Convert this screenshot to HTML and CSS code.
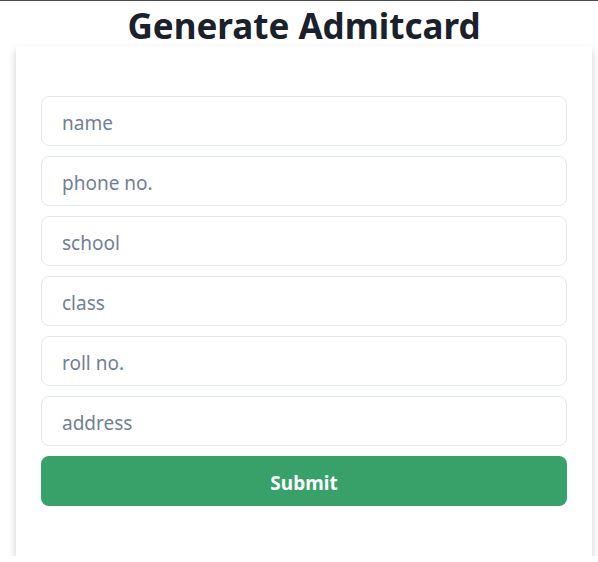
FILE: index.html
```html
<!DOCTYPE html>
<html>
<head>
<meta charset="utf-8">
<link rel="stylesheet" href="styles.css">
</head>
<body>
<div class="wrap">
  <h1 class="title">Generate Admitcard</h1>
  <form class="card">
    <input class="field" type="text" placeholder="name">
    <input class="field" type="text" placeholder="phone no.">
    <input class="field" type="text" placeholder="school">
    <input class="field" type="text" placeholder="class">
    <input class="field" type="text" placeholder="roll no.">
    <input class="field" type="text" placeholder="address">
    <button class="submit" type="button">Submit</button>
  </form>
</div>
</body>
</html>
```
FILE: styles.css
```css
html, body {
  margin: 0;
  padding: 0;
  background: #ffffff;
}
body {
  border-top: 1px solid #4a4a4a;
  font-family: "Noto Sans", "Open Sans", sans-serif;
}
.wrap {
  margin-left: 16px;
  width: 576px;
}
.title {
  margin: 0;
  height: 45px;
  text-align: center;
  font-size: 35px;
  line-height: 49px;
  font-weight: 700;
  color: #1a202c;
  letter-spacing: 0;
}
.card {
  background: #fff;
  box-shadow: 0 4px 8px rgba(0,0,0,0.2);
  padding: 50px 25px 50px;
  display: flex;
  flex-direction: column;
  gap: 10px;
}
.field {
  box-sizing: border-box;
  height: 50px;
  width: 100%;
  margin: 0;
  border: 1px solid #e2e8f0;
  border-radius: 8px;
  padding: 4px 20px 0;
  font-family: inherit;
  font-size: 19px;
  color: #4a5568;
  outline: none;
}
.field::placeholder {
  color: #718096;
  opacity: 1;
}
.submit {
  height: 50px;
  width: 100%;
  border: none;
  border-radius: 8px;
  padding: 3px 0 0;
  background: #38a169;
  color: #fff;
  font-family: inherit;
  font-size: 19px;
  font-weight: 700;
  cursor: pointer;
}
```
